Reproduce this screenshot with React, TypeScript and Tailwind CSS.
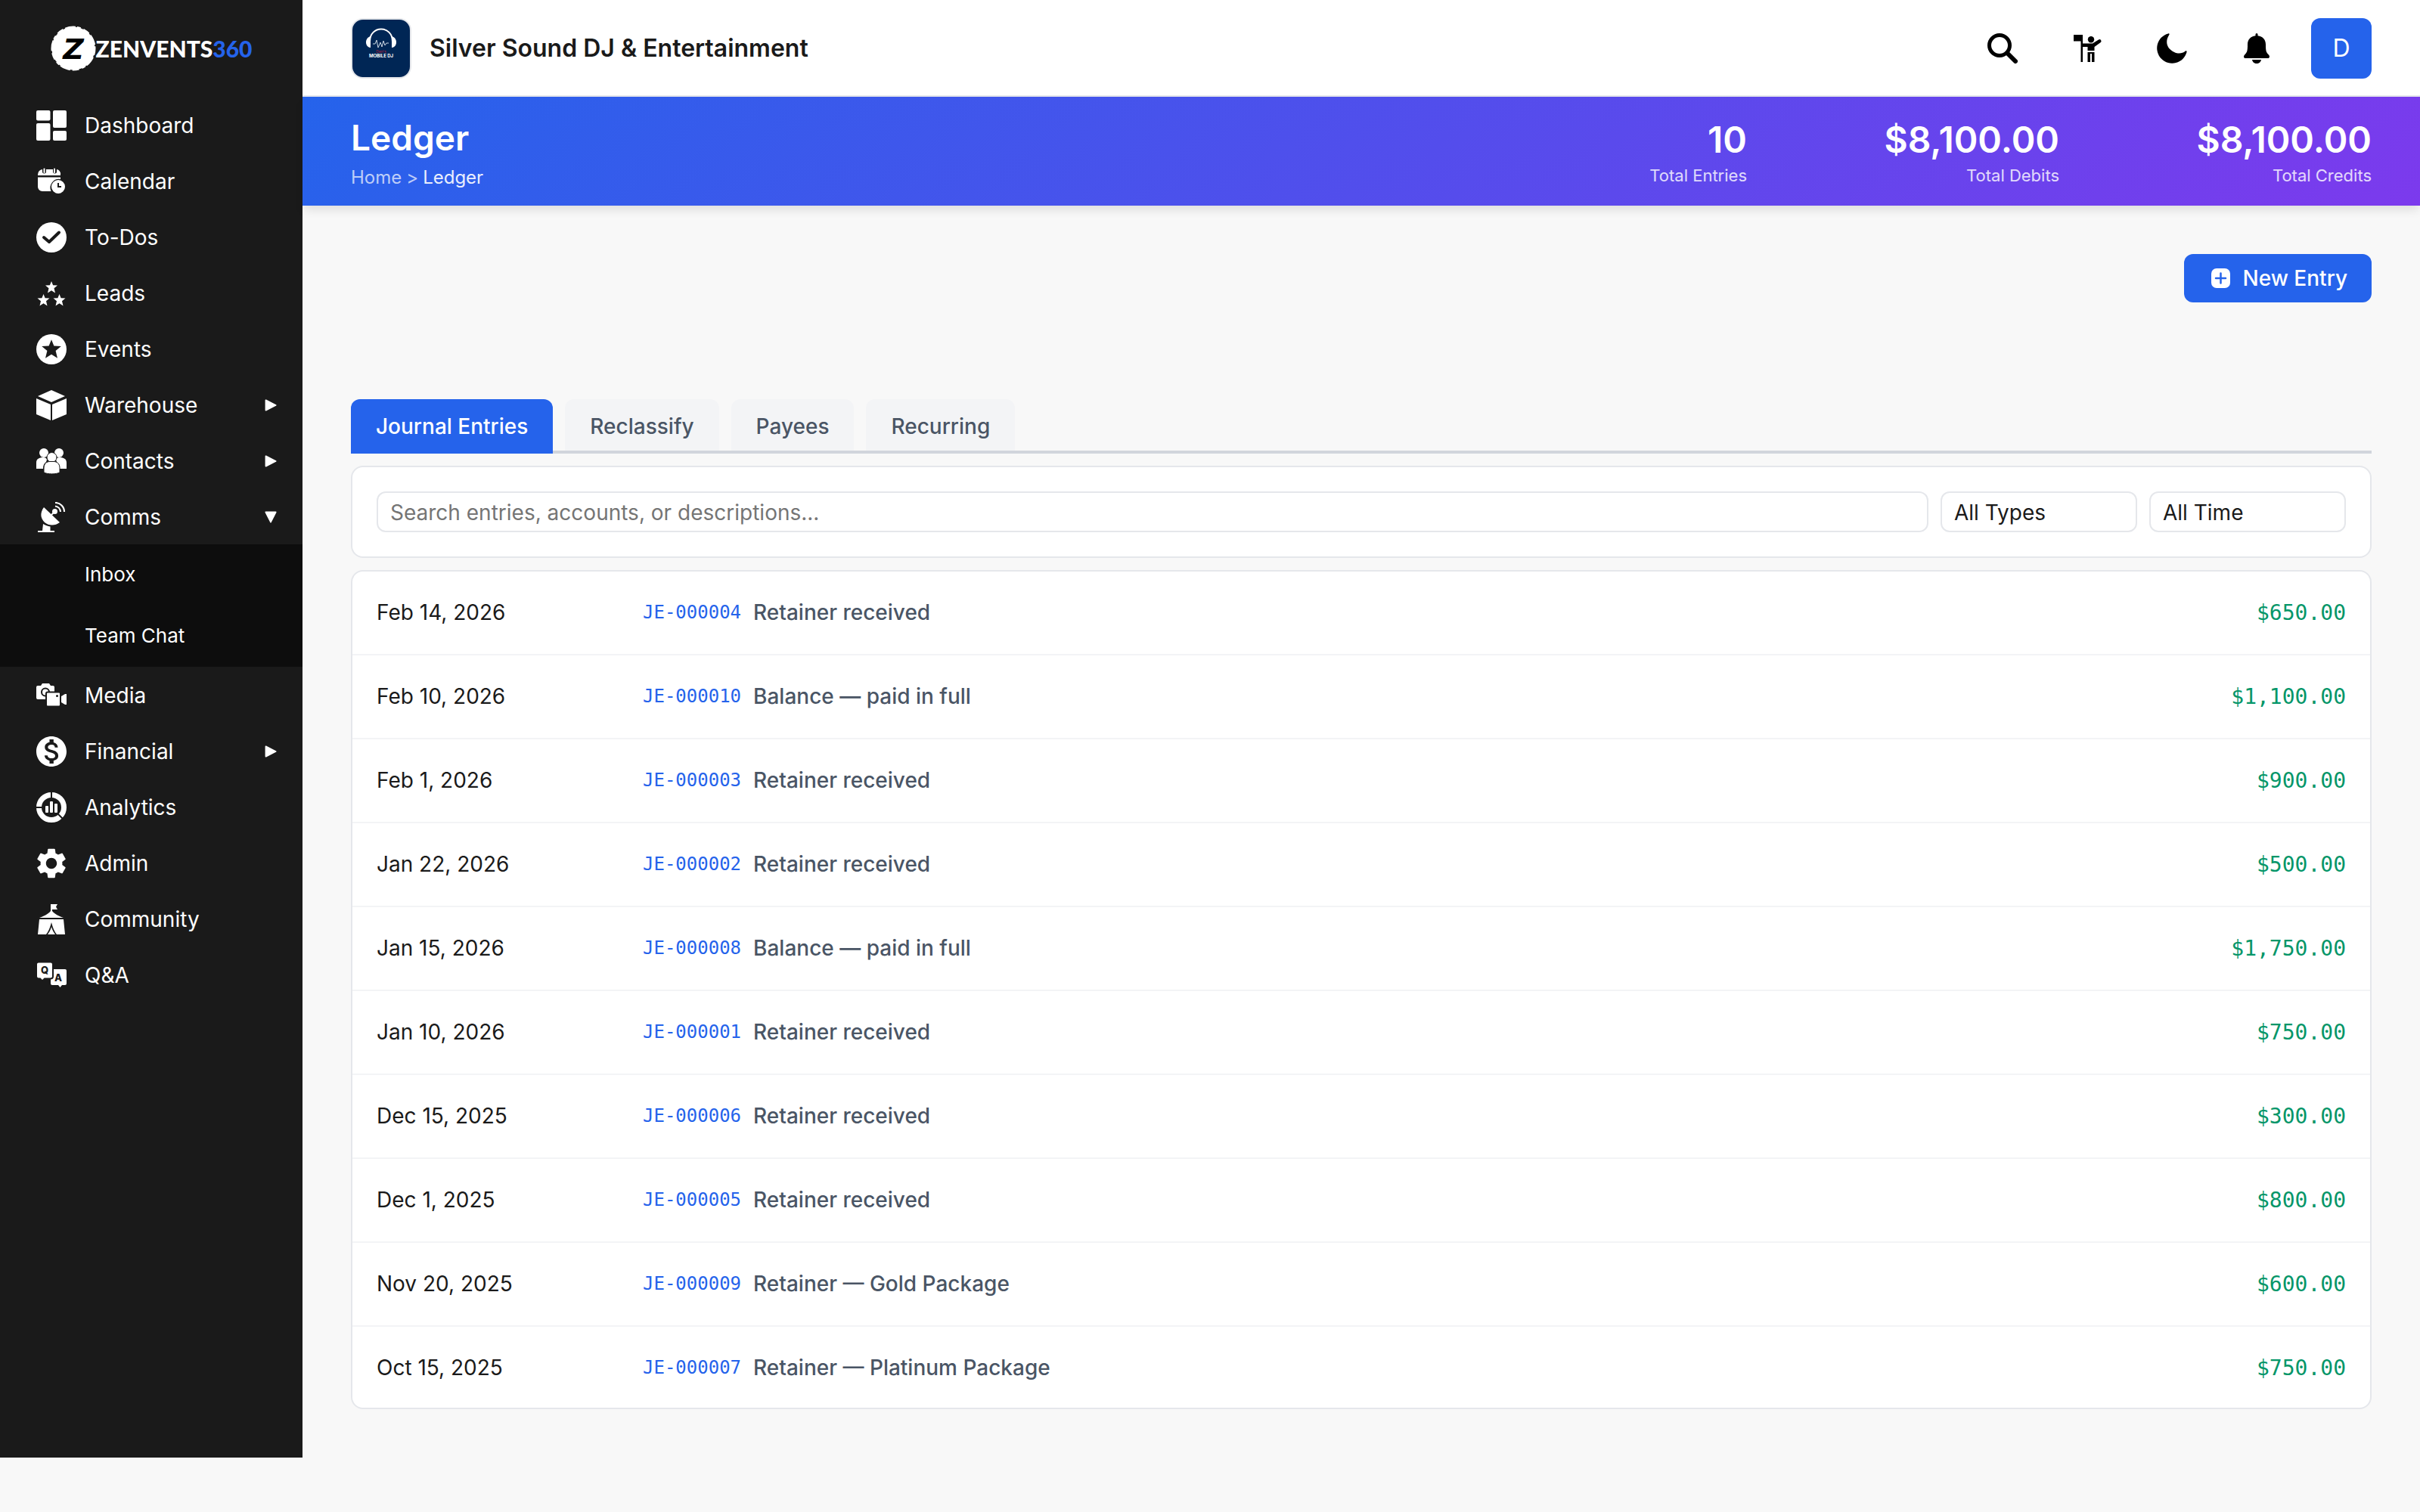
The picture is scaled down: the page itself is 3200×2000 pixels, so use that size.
import React, { useState } from "react";
import { MdMonetizationOn, MdSettings } from "react-icons/md";

type IconProps = { children: React.ReactNode };

const Icon = ({ children }: IconProps) => (
  <svg viewBox="0 0 40 40" className="h-10 w-10 shrink-0 fill-current" aria-hidden="true">
    {children}
  </svg>
);

const STAR = "M0-8 2.1-2.8 8-2.5 3.5 1.3 5 7.4 0 4.2-5 7.4-3.5 1.3-8-2.5-2.1-2.8Z";

const DashboardIcon = () => (
  <Icon>
    <rect x="0" y="0" width="18.5" height="13.5" rx="2" />
    <rect x="0" y="17" width="18.5" height="23" rx="2" />
    <rect x="22" y="0" width="18" height="23" rx="2" />
    <rect x="22" y="27" width="18" height="13" rx="2" />
  </Icon>
);

const CalendarIcon = () => (
  <Icon>
    <path d="M2 12v-1a7 7 0 0 1 6-7v3a2.5 2.5 0 0 0 5 0V4h9v3a2.5 2.5 0 0 0 5 0V4a6 6 0 0 1 5 7v1Z" />
    <path d="M2 14.5h30V17a11.5 11.5 0 0 0-12.5 16H8a6 6 0 0 1-6-6Z" />
    <rect x="9.5" y="2.5" width="2" height="6.5" rx="1" />
    <rect x="23" y="2.5" width="2" height="6.5" rx="1" />
    <path
      fillRule="evenodd"
      d="M29 18a9 9 0 1 0 0 18 9 9 0 0 0 0-18Zm-1 4h2v4h3v2h-5Z"
    />
  </Icon>
);

const TodosIcon = () => (
  <Icon>
    <circle cx="20" cy="20" r="20" />
    <path
      d="M10 20l7 6 13-12.5"
      fill="none"
      stroke="#1a1a1a"
      strokeWidth="4"
      strokeLinecap="round"
      strokeLinejoin="round"
    />
  </Icon>
);

const LeadsIcon = () => (
  <Icon>
    <path transform="translate(20 12)" d={STAR} />
    <path transform="translate(9.5 29)" d={STAR} />
    <path transform="translate(30.5 29)" d={STAR} />
  </Icon>
);

const EventsIcon = () => (
  <Icon>
    <circle cx="20" cy="20" r="20" />
    <path transform="translate(20 20) scale(1.6)" fill="#1a1a1a" d={STAR} />
  </Icon>
);

const WarehouseIcon = () => (
  <Icon>
    <path d="M20 0 38 8 20 16 2 8Z" />
    <path d="M0 11 19 19V40L0 32Z" />
    <path d="M40 11 21 19V40l19-8Z" />
  </Icon>
);

const ContactsIcon = () => (
  <Icon>
    <circle cx="10" cy="9" r="6" />
    <circle cx="30" cy="9" r="6" />
    <path d="M0 30v-8c0-5 4-7 9-7 3 0 4.5 1 5 3l-1 3c-3 2-4 5-4 9Z" />
    <path d="M40 30v-8c0-5-4-7-9-7-3 0-4.5 1-5 3l1 3c3 2 4 5 4 9Z" />
    <g stroke="#1a1a1a" strokeWidth="1">
      <circle cx="20.5" cy="15" r="6.5" />
      <path d="M10 35v-6c0-6 4-8.5 8-8.5h5c4 0 8 2.5 8 8.5v6c-5 2.5-16 2.5-21 0Z" />
    </g>
  </Icon>
);

const CommsIcon = () => (
  <Icon>
    <path d="M10 7 31 27c-6 4.5-14 5-20 0-6-6-6-13-1-20Z" />
    <circle cx="24.5" cy="12.5" r="3.5" />
    <path d="M19 18l5-5" stroke="currentColor" strokeWidth="2" />
    <path d="M9 29c3 2 6 3 9.5 3.5V38H24v2H2v-2h6Z" />
    <path
      d="M25 5.5a8 8 0 0 1 7 7.5M25 1a12 12 0 0 1 12 12"
      fill="none"
      stroke="currentColor"
      strokeWidth="2.2"
    />
  </Icon>
);

const MediaIcon = () => (
  <Icon>
    <path d="M2 7h4l2-3h9l2 3h3a2 2 0 0 1 2 2v16H2a2 2 0 0 1-2-2V9a2 2 0 0 1 2-2Z" />
    <circle cx="12" cy="15.5" r="5" fill="none" stroke="#1a1a1a" strokeWidth="2" />
    <path
      d="M15 15.5h15a2 2 0 0 1 2 2v15a2 2 0 0 1-2 2H15a2 2 0 0 1-2-2v-15a2 2 0 0 1 2-2Z"
      stroke="#1a1a1a"
      strokeWidth="2"
    />
    <path d="M33 21l5-3h2v14h-2l-5-3Z" />
    <circle cx="27.5" cy="20.5" r="1.5" fill="#1a1a1a" />
  </Icon>
);

const AnalyticsIcon = () => (
  <Icon>
    <circle cx="20" cy="20" r="16.5" fill="none" stroke="currentColor" strokeWidth="7" />
    <path d="M20 0v9M0 20h9M27 27l8 8" stroke="#1a1a1a" strokeWidth="2" />
    <rect x="12" y="18" width="4" height="9" rx="1" />
    <rect x="18" y="12" width="4" height="15" rx="1" />
    <rect x="24" y="15" width="4" height="12" rx="1" />
  </Icon>
);

const CommunityIcon = () => (
  <Icon>
    <path d="M19 0h9l-2 3.5L28 7h-7v2c3 4 9 7 15 9H4c6-2 12-5 15-9Z" />
    <path d="M4 20h32l2 20H27c-3-4-5-8-7-16-2 8-4 12-7 16H2Z" />
    <path d="M20 30c1 4 3 7 5 10H15c2-3 4-6 5-10Z" />
  </Icon>
);

const QaIcon = () => (
  <Icon>
    <path d="M21 12h17a2 2 0 0 1 2 2v17a2 2 0 0 1-2 2h-4l-2.5 3-2.5-3h-8a2 2 0 0 1-2-2V14a2 2 0 0 1 2-2Z" />
    <path
      d="M3 2.5h16a3 3 0 0 1 3 3v16a3 3 0 0 1-3 3h-8l-3 3-3-3H3a3 3 0 0 1-3-3v-16a3 3 0 0 1 3-3Z"
      stroke="#1a1a1a"
      strokeWidth="2"
    />
    <g fill="#1a1a1a" textAnchor="middle" fontFamily="Inter, sans-serif" fontWeight="800" fontSize="13">
      <text x="11" y="18">Q</text>
      <text x="29" y="28">A</text>
    </g>
  </Icon>
);

const FinancialIcon = () => <MdMonetizationOn className="-m-1 h-12 w-12 shrink-0" />;
const AdminIcon = () => <MdSettings className="-m-1 h-12 w-12 shrink-0" />;

const SearchIcon = () => (
  <Icon>
    <g fill="none" stroke="currentColor">
      <circle cx="16" cy="16" r="13.5" strokeWidth="5" />
      <path d="M26.5 26.5 37 37" strokeWidth="6" strokeLinecap="round" />
    </g>
  </Icon>
);

const GuideIcon = () => (
  <Icon>
    <path d="M2 2h12v11.5h13l8-5a2.2 2.2 0 0 1 2.5 3.8L29.5 18v5h-9v-5H14v20h-2.5V10.5H2Z" />
    <circle cx="25" cy="8.3" r="4.2" />
    <path d="M20.500 25h9v13h-3.500V27h-2v11h-3.500Z" />
  </Icon>
);

const MoonIcon = () => (
  <Icon>
    <path d="M15 .4A20 20 0 1 0 39.500 25c.4-1.500-.8-2.300-2-1.200C34 27 28 27.500 23 25 13 20 10.500 11 16.300 2c.8-1.200 0-2-1.300-1.600Z" />
  </Icon>
);

const BellIcon = () => (
  <Icon>
    <path d="M20 0a1.500 1.500 0 0 1 1.500 1.500v1.800c6.500.8 10.500 5 10.500 11.700 0 8 .5 10 3.500 13 2.500 2.500 1.500 5-.5 5H5c-2 0-3-2.500-.5-5C7.500 25 8 23 8 15 8 8.300 12 4.100 18.500 3.300V1.500A1.500 1.500 0 0 1 20 0Z" />
    <path d="M14 35h12c-.5 3-3 5-6 5s-5.500-2-6-5Z" />
  </Icon>
);

const PlusIcon = () => (
  <svg viewBox="0 0 32 32" className="h-8 w-8" aria-hidden="true">
    <rect x="4" y="3" width="25" height="26" rx="7" fill="white" />
    <path d="M16.5 9.5v13M10 16h13" stroke="#2563eb" strokeWidth="2.5" strokeLinecap="round" />
  </svg>
);

const Caret = ({ open }: { open?: boolean }) => (
  <svg viewBox="0 0 16 16" className={`h-4 w-4 fill-current ${open ? "rotate-90" : ""}`} aria-hidden="true">
    <path d="M2 .6 14.5 7a1 1 0 0 1 0 2L2 15.4A1 1 0 0 1 .6 14.5v-13A1 1 0 0 1 2 .6Z" />
  </svg>
);

type NavItem = {
  label: string;
  icon: () => React.ReactElement;
  expandable?: boolean;
  items?: string[];
};

const navItems: NavItem[] = [
  { label: "Dashboard", icon: DashboardIcon },
  { label: "Calendar", icon: CalendarIcon },
  { label: "To-Dos", icon: TodosIcon },
  { label: "Leads", icon: LeadsIcon },
  { label: "Events", icon: EventsIcon },
  { label: "Warehouse", icon: WarehouseIcon, expandable: true },
  { label: "Contacts", icon: ContactsIcon, expandable: true },
  { label: "Comms", icon: CommsIcon, expandable: true, items: ["Inbox", "Team Chat"] },
  { label: "Media", icon: MediaIcon },
  { label: "Financial", icon: FinancialIcon, expandable: true },
  { label: "Analytics", icon: AnalyticsIcon },
  { label: "Admin", icon: AdminIcon },
  { label: "Community", icon: CommunityIcon },
  { label: "Q&A", icon: QaIcon },
];

const stats = [
  { value: "10", label: "Total Entries" },
  { value: "$8,100.00", label: "Total Debits" },
  { value: "$8,100.00", label: "Total Credits" },
];

const tabs = ["Journal Entries", "Reclassify", "Payees", "Recurring"];

const entries = [
  { date: "Feb 14, 2026", number: "JE-000004", text: "Retainer received", amount: "$650.00" },
  { date: "Feb 10, 2026", number: "JE-000010", text: "Balance — paid in full", amount: "$1,100.00" },
  { date: "Feb 1, 2026", number: "JE-000003", text: "Retainer received", amount: "$900.00" },
  { date: "Jan 22, 2026", number: "JE-000002", text: "Retainer received", amount: "$500.00" },
  { date: "Jan 15, 2026", number: "JE-000008", text: "Balance — paid in full", amount: "$1,750.00" },
  { date: "Jan 10, 2026", number: "JE-000001", text: "Retainer received", amount: "$750.00" },
  { date: "Dec 15, 2025", number: "JE-000006", text: "Retainer received", amount: "$300.00" },
  { date: "Dec 1, 2025", number: "JE-000005", text: "Retainer received", amount: "$800.00" },
  { date: "Nov 20, 2025", number: "JE-000009", text: "Retainer — Gold Package", amount: "$600.00" },
  { date: "Oct 15, 2025", number: "JE-000007", text: "Retainer — Platinum Package", amount: "$750.00" },
];

function Sidebar() {
  const [openMenu, setOpenMenu] = useState("Comms");

  return (
    <aside className="mb-[72px] w-[400px] shrink-0 bg-[#1a1a1a] text-white">
      <a href="#" className="flex h-32 items-center justify-center">
        <svg viewBox="0 0 60 60" className="h-[60px] w-[60px]" aria-hidden="true">
          <circle cx="30" cy="30" r="28.5" fill="white" />
          <circle cx="30" cy="30" r="28.5" fill="none" stroke="white" strokeWidth="2" strokeDasharray="9 3 14 2 5 4" />
          <text
            x="30"
            y="44"
            textAnchor="middle"
            fontFamily="DejaVu Sans, sans-serif"
            fontStyle="italic"
            fontWeight="700"
            fontSize="38">
            Z
          </text>
        </svg>
        <span className="font-['Lato',sans-serif] text-[30px] font-black">
          ZENVENTS<span className="text-[#2563eb]">360</span>
        </span>
      </a>
      <nav className="text-[28px]">
        {navItems.map(({ label, icon: ItemIcon, expandable, items }) => {
          const isOpen = openMenu === label;
          return (
            <div key={label}>
              {expandable ? (
                <button
                  className="flex h-[74px] w-full items-center gap-6 pt-0.5 pr-[34px] pl-12"
                  aria-expanded={isOpen}
                  onClick={() => setOpenMenu(isOpen ? "" : label)}>
                  <ItemIcon />
                  <span className="flex-1 text-left">{label}</span>
                  <Caret open={isOpen} />
                </button>
              ) : (
                <a href="#" className="flex h-[74px] items-center gap-6 pt-0.5 pr-[34px] pl-12">
                  <ItemIcon />
                  <span>{label}</span>
                </a>
              )}
              {isOpen && items && (
                <div className="bg-[#0d0d0d] text-[26px]">
                  {items.map((item) => (
                    <a key={item} href="#" className="flex h-[81px] items-center pb-0.5 pl-28">
                      {item}
                    </a>
                  ))}
                </div>
              )}
            </div>
          );
        })}
      </nav>
    </aside>
  );
}

function CompanyLogo() {
  return (
    <svg viewBox="0 0 76 76" className="h-20 w-20 rounded-2xl border-2 border-gray-200 bg-[#002655]" aria-hidden="true">
      <path d="M23 29C23 7 53 7 53 29" fill="none" stroke="white" strokeWidth="2" />
      <path d="M24 22c-8 2-8 14 0 15ZM52 22c8 2 8 14 0 15Z" fill="white" />
      <path d="M27 32h3l2-5 2 10 3-7 2 6 2-8 2 6 2-3h3" fill="none" stroke="#cbd5e1" strokeWidth="1" />
      <g textAnchor="middle" fontFamily="Inter, sans-serif">
        <text x="38" y="44" fontSize="5" fill="#b91c3c">Dan's</text>
        <text x="38" y="50" fontSize="6" fontWeight="700" fill="white">MOBILE DJ</text>
      </g>
    </svg>
  );
}

function Header() {
  return (
    <header className="flex h-32 items-center justify-between border-b-2 border-gray-200 bg-white px-16 pt-0.5">
      <div className="flex items-center gap-6">
        <CompanyLogo />
        <span className="text-[32px] font-semibold">Silver Sound DJ &amp; Entertainment</span>
      </div>
      <div className="flex gap-8 text-black">
        <button aria-label="Search" className="flex size-20 items-center justify-center">
          <SearchIcon />
        </button>
        <button aria-label="Guide" className="flex size-20 items-center justify-center">
          <GuideIcon />
        </button>
        <button aria-label="Dark mode" className="flex size-20 items-center justify-center">
          <MoonIcon />
        </button>
        <button aria-label="Notifications" className="flex size-20 items-center justify-center">
          <BellIcon />
        </button>
        <button className="flex size-20 items-center justify-center rounded-xl bg-[#2563eb] text-[32px] text-white">
          D
        </button>
      </div>
    </header>
  );
}

function Banner() {
  return (
    <section className="flex h-36 items-center justify-between bg-linear-[135deg,#2563eb,#7c3aed] px-16 pt-1.5 text-white shadow-[0_8px_12px_-2px_rgba(0,0,0,0.1)]">
      <div>
        <h1 className="text-[46px] leading-[58px] font-semibold">Ledger</h1>
        <div className="mt-1.5 flex gap-1.5 text-[24px] leading-[36px] text-white/70">
          <a href="#">Home</a>
          <span>&gt;</span>
          <span className="text-white/90">Ledger</span>
        </div>
      </div>
      <dl className="flex gap-16 text-right">
        {stats.map(({ value, label }) => (
          <div key={label} className="flex w-[349px] flex-col-reverse">
            <dt className="text-[22px] leading-[36px] text-white/80">{label}</dt>
            <dd className="text-[48px] leading-[58px] font-semibold">{value}</dd>
          </div>
        ))}
      </dl>
    </section>
  );
}

function Filters() {
  return (
    <div className="mt-4 flex gap-4 rounded-2xl border-2 border-gray-200 bg-white p-8">
      <input
        type="text"
        aria-label="Search entries"
        placeholder="Search entries, accounts, or descriptions..."
        className="h-[54px] min-w-0 flex-1 rounded-xl border-2 border-gray-200 px-4 pt-0.5 placeholder:text-[#757575]"
      />
      <select
        aria-label="Entry type"
        className="h-[54px] w-[260px] appearance-none rounded-xl border-2 border-gray-200 px-4 pt-0.5">
        <option>All Types</option>
      </select>
      <select
        aria-label="Period"
        className="h-[54px] w-[260px] appearance-none rounded-xl border-2 border-gray-200 px-4 pt-0.5">
        <option>All Time</option>
      </select>
    </div>
  );
}

function EntriesTable() {
  return (
    <div className="mt-4 overflow-hidden rounded-2xl border-2 border-gray-200 bg-white">
      <table className="w-full border-separate border-spacing-0 leading-[45px]">
        <tbody>
          {entries.map(({ date, number, text, amount }) => (
            <tr key={number} className="*:border-b-2 *:border-gray-100 *:py-8 last:*:border-b-0 last:*:pb-[30px]">
              <td className="w-[384px] pl-8">{date}</td>
              <td>
                <div className="flex items-center gap-4">
                  <a href="#" className="font-['DejaVu_Sans_Mono',monospace] text-[24px] text-[#2563eb]">
                    {number}
                  </a>
                  <span className="font-medium text-gray-600">{text}</span>
                </div>
              </td>
              <td className="pr-8 text-right font-['DejaVu_Sans_Mono',monospace] text-[#059669]">{amount}</td>
            </tr>
          ))}
        </tbody>
      </table>
    </div>
  );
}

export default function App() {
  const [activeTab, setActiveTab] = useState(tabs[0]);

  return (
    <div className="flex min-h-screen bg-[#f8f8f8] font-['Inter',sans-serif] text-[28px] text-[#1a1a1a]">
      <Sidebar />
      <div className="min-w-0 flex-1">
        <Header />
        <Banner />
        <main className="px-16 pt-16">
          <div className="flex justify-end">
            <button className="flex h-16 items-center gap-3.5 rounded-xl bg-[#2563eb] px-8 font-medium text-white">
              <PlusIcon />
              New Entry
            </button>
          </div>
          <div role="tablist" className="mt-32 flex gap-4 border-b-4 border-gray-300">
            {tabs.map((tab) => (
              <button
                key={tab}
                role="tab"
                aria-selected={tab === activeTab}
                onClick={() => setActiveTab(tab)}
                className={`${
                  tab === activeTab
                    ? "-mb-1 h-[72px] bg-[#2563eb] text-white"
                    : "h-[68px] bg-gray-100 pt-1 text-gray-600"
                } rounded-t-xl px-[33px] font-medium`}>
                {tab}
              </button>
            ))}
          </div>
          <Filters />
          <EntriesTable />
        </main>
      </div>
    </div>
  );
}
